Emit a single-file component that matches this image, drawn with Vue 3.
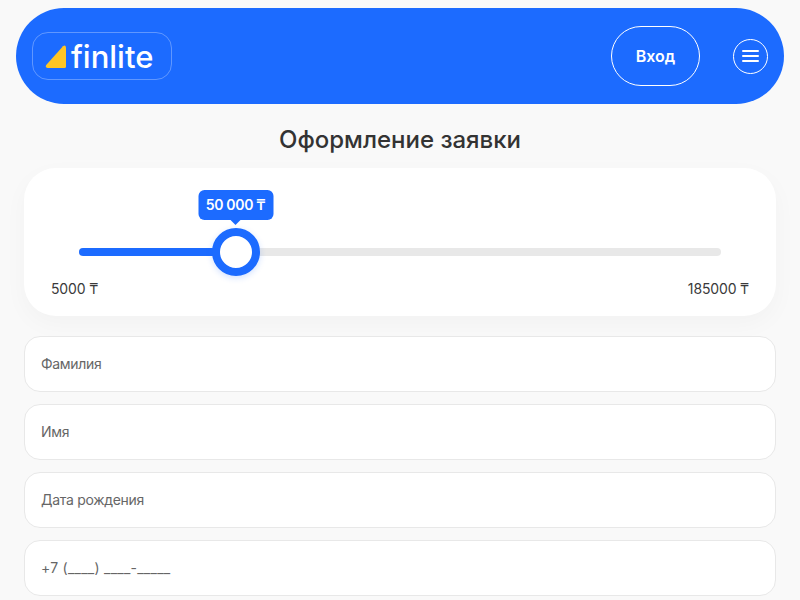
<script setup>
const fields = ['Фамилия', 'Имя', 'Дата рождения', '+7 (____) ____-_____']
const percent = ((236 - 79) / 642) * 100
</script>

<template>
  <div class="page">
    <header class="header">
      <div class="logo">
        <svg class="logo-mark" width="22" height="24" viewBox="0 0 22 24">
          <path d="M18 1.2 L1.2 20 Q0 22.8 2.6 23 L19.5 23 Q21 23 21 21.5 L21 2.5 Q20.6 -0.5 18 1.2 Z" fill="#ffc524" />
        </svg>
        <span class="logo-text">finlite</span>
      </div>
      <button class="login">Вход</button>
      <button class="menu" aria-label="Меню">
        <span></span><span></span><span></span>
      </button>
    </header>

    <h1 class="title">Оформление заявки</h1>

    <section class="card">
      <div class="slider">
        <div class="track">
          <div class="fill" :style="{ width: percent + '%' }"></div>
          <div class="thumb" :style="{ left: percent + '%' }">
            <div class="bubble">50 000 ₸</div>
          </div>
        </div>
      </div>
      <div class="limits">
        <span>5000 ₸</span>
        <span>185000 ₸</span>
      </div>
    </section>

    <form class="fields">
      <div
        v-for="(f, i) in fields"
        :key="f"
        class="field"
        :class="{ 'field-phone': i === 3 }"
      >{{ f }}</div>
    </form>
  </div>
</template>

<style>
html, body { margin: 0; background: #f9f9f9; }
</style>

<style scoped>
.page {
  height: 600px;
  overflow: hidden;
  box-sizing: border-box;
  padding: 8px 16px 0;
  font-family: Inter, "Noto Sans", sans-serif;
  color: #333;
  background: #f9f9f9;
}
.header {
  height: 96px;
  border-radius: 48px;
  background: #1c6bff;
  display: flex;
  align-items: center;
  padding: 0 16px;
}
.logo {
  width: 140px;
  height: 48px;
  box-sizing: border-box;
  border: 1px solid rgba(255, 255, 255, 0.3);
  border-radius: 16px;
  display: flex;
  align-items: center;
  padding-left: 12px;
  gap: 4px;
}
.logo-mark { flex: none; margin-top: 1px; }
.logo-text {
  color: #fff;
  font-size: 31px;
  font-weight: 500;
  line-height: 1;
}
.login {
  margin-left: auto;
  width: 89px;
  height: 60px;
  box-sizing: border-box;
  border: 1px solid #fff;
  border-radius: 30px;
  background: transparent;
  color: #fff;
  font: 600 16px Inter, sans-serif;
  padding: 0;
}
.menu {
  margin-left: 33px;
  width: 35px;
  height: 35px;
  box-sizing: border-box;
  border: 1px solid #fff;
  border-radius: 50%;
  background: transparent;
  padding: 0;
  display: flex;
  flex-direction: column;
  align-items: center;
  justify-content: center;
  gap: 3px;
}
.menu span {
  display: block;
  width: 17px;
  height: 2px;
  background: #fff;
  border-radius: 1px;
}
.title {
  margin: 20px 0 12px;
  text-align: center;
  font-size: 24px;
  line-height: 32px;
  font-weight: 500;
  color: #333;
}
.card {
  margin: 0 8px;
  height: 148px;
  box-sizing: border-box;
  background: #fff;
  border-radius: 32px;
  box-shadow: 0 8px 24px rgba(0, 0, 0, 0.03);
  padding: 80px 27px 0;
}
.slider { padding: 0 28px; }
.track {
  position: relative;
  height: 8px;
  border-radius: 4px;
  background: #e8e8e8;
}
.fill {
  height: 100%;
  border-radius: 4px;
  background: #1c6bff;
}
.thumb {
  position: absolute;
  top: 50%;
  width: 48px;
  height: 48px;
  box-sizing: border-box;
  transform: translate(-50%, -50%);
  border: 8px solid #1c6bff;
  border-radius: 50%;
  background: #fff;
  box-shadow: 0 2px 6px rgba(28, 107, 255, 0.2);
}
.bubble {
  position: absolute;
  left: 50%;
  bottom: 48px;
  transform: translateX(-50%);
  margin-left: -0.5px;
  width: 75px;
  height: 30px;
  text-align: center;
  border-radius: 6px;
  background: #1c6bff;
  color: #fff;
  font-size: 14px;
  font-weight: 600;
  letter-spacing: -0.3px;
  line-height: 30px;
  white-space: nowrap;
}
.bubble::after {
  content: "";
  position: absolute;
  left: 50%;
  top: 100%;
  margin-left: -5px;
  border: 5px solid transparent;
  border-top-color: #1c6bff;
  border-bottom: 0;
}
.limits {
  display: flex;
  justify-content: space-between;
  margin-top: 23px;
  font-size: 14px;
  letter-spacing: -0.15px;
  line-height: 20px;
  color: #3a3a3a;
}
.fields {
  margin: 20px 8px 0;
  display: flex;
  flex-direction: column;
  gap: 12px;
}
.field {
  height: 56px;
  flex: none;
  box-sizing: border-box;
  border: 1px solid #e8e8e8;
  border-radius: 16px;
  background: #fff;
  display: flex;
  align-items: center;
  padding: 0 16px 2px;
  font-size: 14px;
  letter-spacing: -0.3px;
  color: #666;
}
.field-phone {
  letter-spacing: 0.25px;
}
</style>
